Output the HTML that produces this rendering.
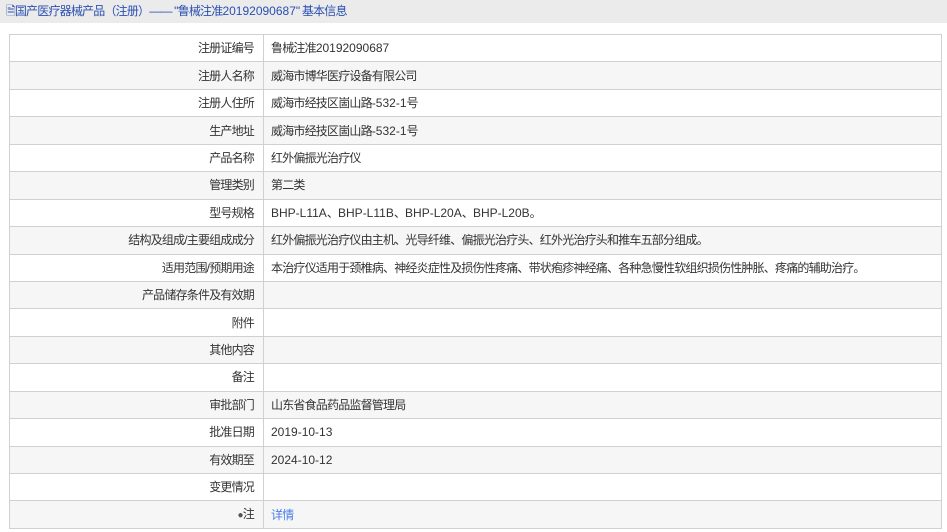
<!DOCTYPE html>
<html><head><meta charset="utf-8"><style>
html,body{margin:0;padding:0;background:#fff;width:947px;height:532px;overflow:hidden;font-family:"Liberation Sans","Noto Sans CJK SC",sans-serif;font-size:12px;letter-spacing:-0.8px;color:#333}
.hd{height:23px;background:#ebebeb;line-height:23px;padding-left:6px;color:#2a4fb0;font-size:12px}
table{position:absolute;left:9px;top:34px;width:933px;border-collapse:collapse;table-layout:fixed}
td{border:1px solid #d0d0d0;height:26.4px;padding:0;line-height:14px;vertical-align:middle;box-sizing:border-box;white-space:nowrap}
tr{height:27.44px}
td.l{width:254px;text-align:right;padding-right:9px}
td.v{padding-left:7px}
.n{letter-spacing:0}
tr:nth-child(even) td{background:#f6f6f6}
a{color:#4a7fe8;text-decoration:none}
</style></head><body>
<div class="hd">🗎国产医疗器械产品（注册）—— "鲁械注准<span class="n">20192090687</span>" 基本信息</div>
<table>
<tr><td class="l">注册证编号</td><td class="v">鲁械注准<span class="n">20192090687</span></td></tr>
<tr><td class="l">注册人名称</td><td class="v">威海市博华医疗设备有限公司</td></tr>
<tr><td class="l">注册人住所</td><td class="v">威海市经技区崮山路<span class="n">-532-1</span>号</td></tr>
<tr><td class="l">生产地址</td><td class="v">威海市经技区崮山路<span class="n">-532-1</span>号</td></tr>
<tr><td class="l">产品名称</td><td class="v">红外偏振光治疗仪</td></tr>
<tr><td class="l">管理类别</td><td class="v">第二类</td></tr>
<tr><td class="l">型号规格</td><td class="v"><span class="n">BHP-L11A</span>、<span class="n">BHP-L11B</span>、<span class="n">BHP-L20A</span>、<span class="n">BHP-L20B</span>。</td></tr>
<tr><td class="l">结构及组成/主要组成成分</td><td class="v">红外偏振光治疗仪由主机、光导纤维、偏振光治疗头、红外光治疗头和推车五部分组成。</td></tr>
<tr><td class="l">适用范围/预期用途</td><td class="v">本治疗仪适用于颈椎病、神经炎症性及损伤性疼痛、带状疱疹神经痛、各种急慢性软组织损伤性肿胀、疼痛的辅助治疗。</td></tr>
<tr><td class="l">产品储存条件及有效期</td><td class="v"></td></tr>
<tr><td class="l">附件</td><td class="v"></td></tr>
<tr><td class="l">其他内容</td><td class="v"></td></tr>
<tr><td class="l">备注</td><td class="v"></td></tr>
<tr><td class="l">审批部门</td><td class="v">山东省食品药品监督管理局</td></tr>
<tr><td class="l">批准日期</td><td class="v"><span class="n">2019-10-13</span></td></tr>
<tr><td class="l">有效期至</td><td class="v"><span class="n">2024-10-12</span></td></tr>
<tr><td class="l">变更情况</td><td class="v"></td></tr>
<tr><td class="l"><span style="color:#555;font-size:10px">●</span>注</td><td class="v"><a>详情</a></td></tr>
</table>
</body></html>
